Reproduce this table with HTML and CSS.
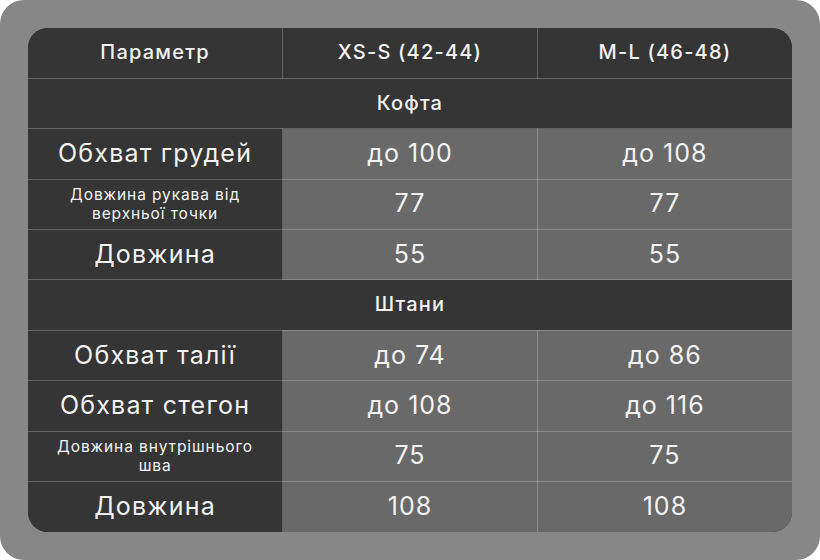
FILE: index.html
```html
<!DOCTYPE html>
<html lang="uk">
<head>
<meta charset="utf-8">
<title>Розмірна сітка</title>
<link rel="stylesheet" href="styles.css">
</head>
<body>
<div class="frame">
  <div class="card">
    <table class="sizes">
      <tr class="head">
        <th>Параметр</th>
        <th>XS-S (42-44)</th>
        <th>M-L (46-48)</th>
      </tr>
      <tr class="section"><td colspan="3">Кофта</td></tr>
      <tr>
        <td class="label">Обхват грудей</td>
        <td class="val">до 100</td>
        <td class="val">до 108</td>
      </tr>
      <tr>
        <td class="label small">Довжина рукава від<br>верхньої точки</td>
        <td class="val">77</td>
        <td class="val">77</td>
      </tr>
      <tr>
        <td class="label">Довжина</td>
        <td class="val">55</td>
        <td class="val">55</td>
      </tr>
      <tr class="section"><td colspan="3">Штани</td></tr>
      <tr>
        <td class="label">Обхват талії</td>
        <td class="val">до 74</td>
        <td class="val">до 86</td>
      </tr>
      <tr>
        <td class="label">Обхват стегон</td>
        <td class="val">до 108</td>
        <td class="val">до 116</td>
      </tr>
      <tr>
        <td class="label small">Довжина внутрішнього<br>шва</td>
        <td class="val">75</td>
        <td class="val">75</td>
      </tr>
      <tr>
        <td class="label">Довжина</td>
        <td class="val">108</td>
        <td class="val">108</td>
      </tr>
    </table>
  </div>
</div>
</body>
</html>
```
FILE: styles.css
```css
html, body {
  margin: 0;
  padding: 0;
  background: #ffffff;
}
body {
  font-family: Inter, "Open Sans", "Liberation Sans", sans-serif;
  color: #f2f2f2;
}
.frame {
  width: 820px;
  height: 560px;
  box-sizing: border-box;
  background: #878787;
  border-radius: 24px;
  padding: 28px;
}
.card {
  width: 764px;
  height: 504px;
  border-radius: 20px;
  overflow: hidden;
  background: #353535;
}
.sizes {
  width: 100%;
  height: 100%;
  border-collapse: collapse;
  table-layout: fixed;
}
.sizes tr {
  height: 50.4px;
}
.sizes th,
.sizes td {
  padding: 0 0 2px;
  text-align: center;
  vertical-align: middle;
  border: 1px solid rgba(255, 255, 255, 0.22);
}
.sizes tr:first-child th { border-top: none; }
.sizes tr:last-child td { border-bottom: none; }
.sizes th:first-child, .sizes td:first-child { border-left: none; }
.sizes th:last-child, .sizes td:last-child { border-right: none; }
.head th {
  background: #353535;
  font-size: 20px;
  font-weight: 500;
  letter-spacing: 1.2px;
}
.section td {
  background: #353535;
  font-size: 20px;
  font-weight: 500;
  letter-spacing: 1.2px;
}
.label {
  background: #353535;
  font-size: 25px;
  font-weight: 400;
  letter-spacing: 1.2px;
}
.sizes .label.small {
  padding: 0;
  font-size: 15.5px;
  line-height: 19px;
  letter-spacing: 0.9px;
}
.val {
  background: #696969;
  font-size: 25px;
  font-weight: 400;
  letter-spacing: 1px;
}
```
